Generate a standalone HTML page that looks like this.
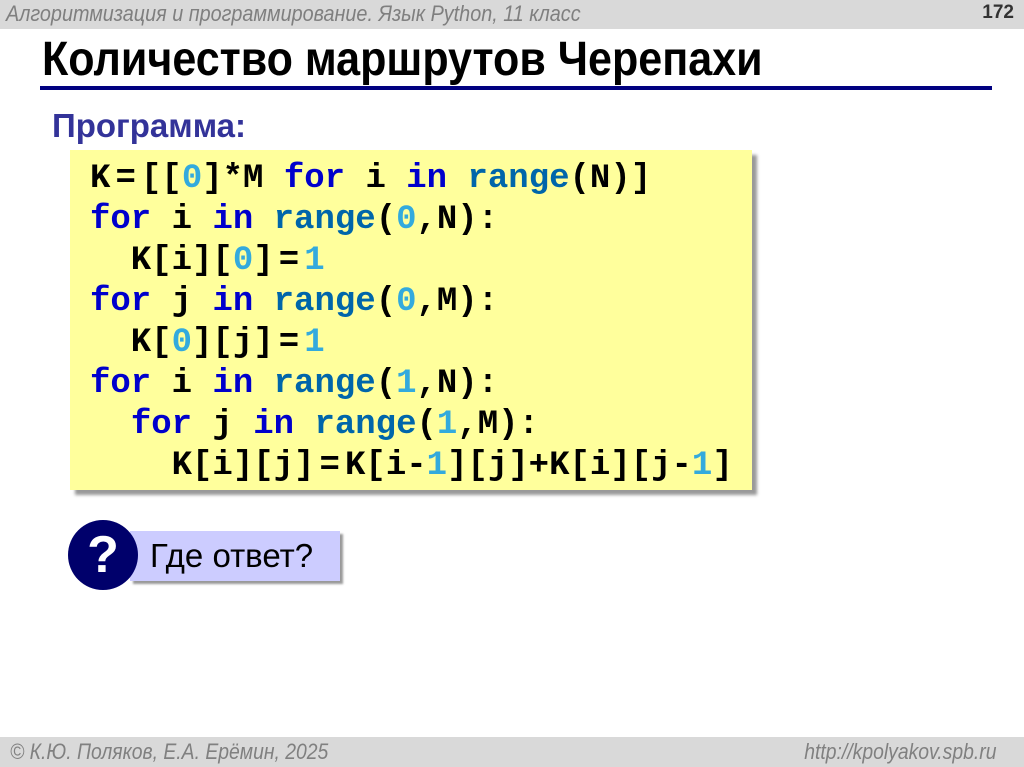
<!DOCTYPE html>
<html><head><meta charset="utf-8"><style>
body{margin:0;width:1024px;height:767px;position:relative;background:#fff;overflow:hidden;font-family:"Liberation Sans",sans-serif}
.hdr{position:absolute;left:0;top:0;width:1024px;height:29px;background:#d9d9d9}
.hdr .t{position:absolute;left:6px;top:1px;font-size:22px;font-style:italic;color:#7f7f7f;white-space:nowrap;transform:scaleX(.9);transform-origin:left}
.hdr .n{position:absolute;right:10px;top:2px;font-size:19px;font-weight:bold;color:#333}
h1{position:absolute;left:42px;top:32px;margin:0;font-size:48px;font-weight:bold;color:#000;white-space:nowrap;transform:scaleX(.897);transform-origin:left}
.rule{position:absolute;left:40px;top:86px;width:952px;height:4px;background:#000080}
.sub{position:absolute;left:52px;top:107px;font-size:33px;font-weight:bold;color:#333399}
.code{position:absolute;left:70px;top:150px;width:682px;height:340px;background:#ffff9c;box-shadow:5px 5px 3px #999}
pre{position:absolute;left:90px;top:159px;margin:0;font-family:"Liberation Mono",monospace;font-weight:bold;font-size:34px;line-height:41px;color:#000}
.k{color:#0000cc}.r{color:#0066aa}.d{color:#33aadd}.e{margin:0 .25ch;letter-spacing:0}
.q{position:absolute;left:68px;top:520px;width:70px;height:70px;border-radius:50%;background:#00006b;color:#fff;font-size:52px;font-weight:bold;text-align:center;line-height:70px;z-index:2}
.lab{position:absolute;left:130px;top:531px;width:210px;height:50px;background:#ccccff;box-shadow:3px 3px 2px #999;font-size:33px;line-height:50px;padding-left:20px;box-sizing:border-box;color:#000;white-space:nowrap}
.ftr{position:absolute;left:0;top:737px;width:1024px;height:30px;background:#d9d9d9;color:#808080;font-style:italic;font-size:22px}
.ftr span{position:absolute;top:2px;white-space:nowrap}
</style></head><body>
<div class="hdr"><span class="t">Алгоритмизация и программирование. Язык Python, 11 класс</span><span class="n">172</span></div>
<h1>Количество маршрутов Черепахи</h1>
<div class="rule"></div>
<div class="sub">Программа:</div>
<div class="code"></div>
<pre>K<span class="e">=</span>[[<span class="d">0</span>]*M <span class="k">for</span> i <span class="k">in</span> <span class="r">range</span>(N)]
<span class="k">for</span> i <span class="k">in</span> <span class="r">range</span>(<span class="d">0</span>,N):
  K[i][<span class="d">0</span>]<span class="e">=</span><span class="d">1</span>
<span class="k">for</span> j <span class="k">in</span> <span class="r">range</span>(<span class="d">0</span>,M):
  K[<span class="d">0</span>][j]<span class="e">=</span><span class="d">1</span>
<span class="k">for</span> i <span class="k">in</span> <span class="r">range</span>(<span class="d">1</span>,N):
  <span class="k">for</span> j <span class="k">in</span> <span class="r">range</span>(<span class="d">1</span>,M):
    K[i][j]<span class="e">=</span>K[i-<span class="d">1</span>][j]+K[i][j-<span class="d">1</span>]</pre>
<div class="q">?</div>
<div class="lab">Где ответ?</div>
<div class="ftr"><span style="left:10px;transform:scaleX(.88);transform-origin:left">© К.Ю. Поляков, Е.А. Ерёмин, 2025</span><span style="right:28px;transform:scaleX(.88);transform-origin:right">http://kpolyakov.spb.ru</span></div>
</body></html>
